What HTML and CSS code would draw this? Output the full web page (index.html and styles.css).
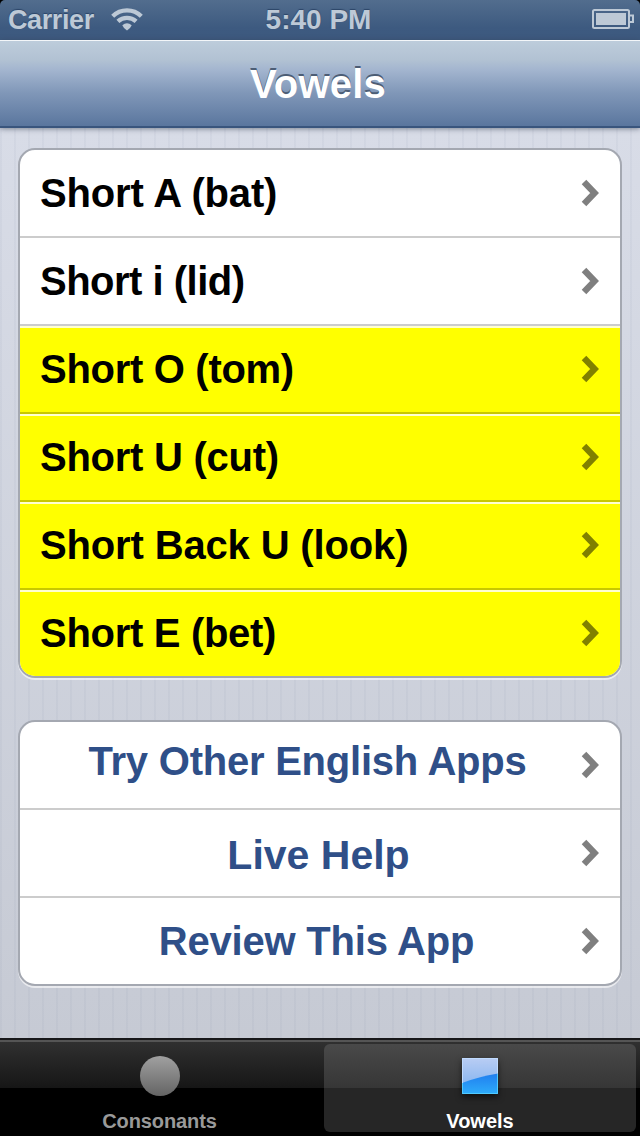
FILE: index.html
```html
<!DOCTYPE html>
<html lang="en">
<head>
<meta charset="utf-8">
<title>Vowels</title>
<link rel="stylesheet" href="styles.css">
</head>
<body>
<svg class="defs" width="0" height="0"><symbol id="chevron" viewBox="0 0 20 28"><path d="M4 3 14.600 14 4 25" fill="none" stroke="currentColor" stroke-width="6.300"/></symbol></svg>
<div class="screen">
  <header class="status">
    <div class="carrier"><span>Carrier</span>
      <svg class="wifi" width="32" height="24" viewBox="0 0 32 24" fill="none" stroke="#bdc9d6" stroke-width="4.300"><path d="M1.700 9.200A20.500 20.500 0 0 1 30.300 9.200M6.900 14.400A13.500 13.500 0 0 1 25.100 14.400"/><path d="M11.300 18.200Q16 14.200 20.700 18.200Q20 20.500 16 23.500Q12 20.500 11.300 18.200Z" fill="#bdc9d6" stroke="none"/></svg>
    </div>
    <span class="clock">5:40 PM</span>
    <svg class="battery" width="44" height="22" viewBox="0 0 44 22"><rect x="1" y="1" width="36" height="18" rx="1.5" fill="none" stroke="#bdc9d6" stroke-width="2"/><rect x="4" y="4" width="30" height="12" fill="#bdc9d6"/><path d="M38 6.500h3v6.500h-3" fill="none" stroke="#bdc9d6" stroke-width="2"/></svg>
  </header>
  <div class="nav"><h1>Vowels</h1></div>
  <main class="content">
    <div class="group">
      <div class="row"><span class="label s1">Short A (bat)</span><svg class="chev"><use href="#chevron"/></svg></div>
      <div class="row"><span class="label s2">Short i (lid)</span><svg class="chev"><use href="#chevron"/></svg></div>
      <div class="row locked"><span class="label s3">Short O (tom)</span><svg class="chev"><use href="#chevron"/></svg></div>
      <div class="row locked"><span class="label s4">Short U (cut)</span><svg class="chev"><use href="#chevron"/></svg></div>
      <div class="row locked"><span class="label s5">Short Back U (look)</span><svg class="chev"><use href="#chevron"/></svg></div>
      <div class="row locked"><span class="label s6">Short E (bet)</span><svg class="chev"><use href="#chevron"/></svg></div>
    </div>
    <div class="group links">
      <div class="row"><span class="label apps">Try Other English Apps</span><svg class="chev"><use href="#chevron"/></svg></div>
      <div class="row"><span class="label help">Live Help</span><svg class="chev"><use href="#chevron"/></svg></div>
      <div class="row"><span class="label review">Review This App</span><svg class="chev"><use href="#chevron"/></svg></div>
    </div>
  </main>
  <nav class="tabs">
    <div class="tab">
      <svg width="60" height="52" viewBox="0 0 60 52"><defs><linearGradient id="grey" x2="0" y2="1"><stop stop-color="#a0a0a0"/><stop offset="1" stop-color="#646464"/></linearGradient></defs><circle cx="30" cy="32" r="20" fill="url(#grey)"/></svg>
      <span class="cons">Consonants</span>
    </div>
    <div class="tab active">
      <svg class="square" width="60" height="52" viewBox="0 0 60 52"><defs><linearGradient id="gloss" x2="0" y2="1"><stop stop-color="#b9cdf4"/><stop offset="1" stop-color="#79aeee"/></linearGradient><linearGradient id="blue" x2="0" y2="1"><stop stop-color="#207eef"/><stop offset="1" stop-color="#2eacfa"/></linearGradient></defs><rect x="12" y="14" width="36" height="36" fill="url(#gloss)"/><path d="M12 39Q29 32.500 48 29.500V50H12Z" fill="url(#blue)"/><path d="M12.500 39V49.500H47.500V29.500" fill="none" stroke="#51caff"/><path d="M12.500 39V14.500H47.500V29.500" fill="none" stroke="#c0dbff"/></svg>
      <span class="vow">Vowels</span>
    </div>
  </nav>
</div>
</body>
</html>
```
FILE: styles.css
```css
* { box-sizing: border-box; }
body { margin: 0; background: #000; font-family: "Liberation Sans", Arial, sans-serif; font-weight: bold; }
.defs { display: block; height: 0; }
.screen { width: 640px; height: 1136px; display: flex; flex-direction: column; overflow: hidden; white-space: nowrap; }
.status { height: 40px; flex: none; display: grid; grid-template-columns: 1fr auto 1fr; background: linear-gradient(#526d8e, #3d5a80 70%, #3d597e); border-radius: 5px 5px 0 0; color: #bdc9d6; font-size: 28px; line-height: 39px; text-shadow: 0 -1px 1px #2c4568; padding: 0 4px 0 8px; }
.carrier { display: flex; gap: 17px; align-items: flex-start; }
.carrier span { font-size: 27px; letter-spacing: -.4px; line-height: 40px; }
.wifi { margin-top: 7px; }
.clock { letter-spacing: 0; margin-right: 7px; }
.battery { justify-self: end; margin-top: 9px; }
.nav { height: 88px; flex: none; border-top: 1px solid #f3f6f9; border-bottom: 2px solid #39557d; background: linear-gradient(#bdccdb, #b2c2d3 22%, #a3b5cf 34%, #8097b8 61%, #5a769e); text-align: center; position: relative; box-shadow: 0 1px 5px rgba(50,60,80,.55); }
h1 { margin: 0; padding-right: 4px; font-size: 40px; line-height: 86px; letter-spacing: .2px; color: #fff; text-shadow: 0 -2px 0 #4c5d75; }
.content { flex: 1; padding: 20px 18px 0; display: flex; flex-direction: column; gap: 42px; background: repeating-linear-gradient(90deg, rgba(100,115,145,.055) 0 2px, transparent 2px 14px), linear-gradient(#d8dce7, #c6cad4); }
.group { border: 2px solid #a4a8b1; border-radius: 17px; overflow: hidden; background: #fff; box-shadow: 0 2px 0 rgba(255,255,255,.6); }
.row { height: 88px; border-bottom: 2px solid #ccc; display: flex; align-items: center; padding: 0 20px; font-size: 40px; line-height: 86px; color: #000; }
.row:last-child { height: 86px; border-bottom: 0; }
.row .label { flex: 1; }
.s1 { letter-spacing: -.15px; }
.s2 { letter-spacing: -.5px; }
.s3, .s6 { letter-spacing: -.3px; }
.s4 { letter-spacing: -.25px; }
.s5 { letter-spacing: -.15px; }
.locked { background: #ff0; border-bottom-color: #c8c800; box-shadow: inset 0 2px 0 #ffffd0; }
.chev { width: 20px; height: 28px; color: #7f7f7f; flex: none; }
.locked .chev { color: #808000; }
.links .row { color: #2f4f88; text-align: center; }
.links .apps { letter-spacing: -.23px; padding-right: 5px; line-height: 78px; height: 86px; }
.links .help { font-size: 41px; padding-left: 17px; line-height: 84px; padding-top: 3px; }
.links .review { letter-spacing: -.2px; padding-left: 13px; }
.tabs { height: 98px; flex: none; display: flex; border-top: 2px solid #17171a; background: linear-gradient(#555 0 2px, #303030 2px, #161616 48px, #000 48px); }
.tab { width: 312px; height: 88px; margin: 4px; display: flex; flex-direction: column; align-items: center; color: #999; font-size: 20px; border-radius: 6px; }
.tab svg { flex: none; }
.tab span { line-height: 22px; margin-top: 14px; }
.cons { letter-spacing: -.1px; padding-right: 1px; }
.tab:first-child { margin-right: 8px; }
.tab.active { margin-left: 0; color: #fff; background: linear-gradient(#494949, #363636 44px, #262626 44px); }
.square { filter: drop-shadow(0 3px 3px rgba(0,0,0,.6)); }
```
